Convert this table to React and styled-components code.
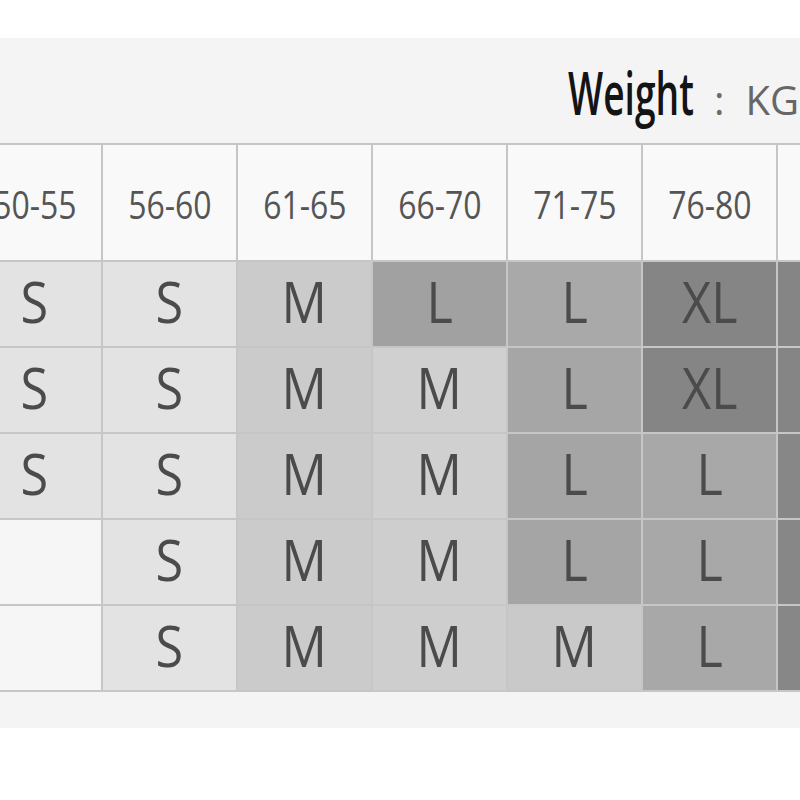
import React from "react";
import styled, { createGlobalStyle } from "styled-components";

const GlobalStyle = createGlobalStyle`
  html, body { margin: 0; padding: 0; background: #ffffff; overflow: hidden; }
  #root { width: 800px; height: 800px; }
`;

const Page = styled.div`
  width: 800px;
  height: 800px;
  box-sizing: border-box;
  padding-top: 38px;
  background: #ffffff;
  font-family: "Open Sans", "Liberation Sans", sans-serif;
`;

const Panel = styled.section`
  background: #f4f4f4;
  overflow: hidden;
  padding-bottom: 36px;
`;

const TitleRow = styled.div`
  height: 105px;
  box-sizing: border-box;
  padding: 25px 0 0 568px;
  display: flex;
  align-items: baseline;
  white-space: nowrap;
  line-height: 1;
`;

const Squeeze = styled.span`
  display: inline-block;
  width: ${(p) => p.$w}px;
  white-space: nowrap;
  & > span {
    display: inline-block;
    transform: scaleX(${(p) => p.$k});
    transform-origin: left center;
  }
`;

const Word = styled.span`
  font-size: 59px;
  font-weight: 600;
  color: #141414;
`;

const Colon = styled.span`
  font-size: 40px;
  color: #6a6a6a;
  margin-left: 22px;
`;

const Unit = styled.span`
  font-size: 40px;
  color: #676767;
  margin-left: 21px;
`;

const Grid = styled.div`
  display: grid;
  grid-template-columns: repeat(7, 133px);
  grid-template-rows: 115px repeat(5, 84px);
  gap: 2px;
  padding: 2px 0;
  margin-left: -32px;
  width: max-content;
  background: #c6c6c6;
`;

const HeadCell = styled.div`
  background: #f9f9f9;
  display: flex;
  align-items: center;
  justify-content: center;
  padding-top: 2px;
  box-sizing: border-box;
  font-size: 39px;
  color: #555555;
  white-space: nowrap;
  & > span {
    display: inline-block;
    transform: scaleX(0.82);
  }
`;

const SizeCell = styled.div`
  background: ${(p) => p.$bg};
  display: flex;
  align-items: center;
  justify-content: center;
  padding-bottom: 7px;
  box-sizing: border-box;
  font-size: 56px;
  color: #4b4b4b;
  white-space: nowrap;
  & > span {
    display: inline-block;
    transform: scaleX(0.9);
  }
`;

const headers = ["50-55", "56-60", "61-65", "66-70", "71-75", "76-80", "81-85"];

const rows = [
  [["S", "#e3e3e3"], ["S", "#e3e3e3"], ["M", "#cbcbcb"], ["L", "#a1a1a1"], ["L", "#a9a9a9"], ["XL", "#858585"], ["XL", "#858585"]],
  [["S", "#e3e3e3"], ["S", "#e3e3e3"], ["M", "#cbcbcb"], ["M", "#d0d0d0"], ["L", "#a6a6a6"], ["XL", "#858585"], ["XL", "#858585"]],
  [["S", "#e3e3e3"], ["S", "#e3e3e3"], ["M", "#cbcbcb"], ["M", "#d0d0d0"], ["L", "#a5a5a5"], ["L", "#a8a8a8"], ["XL", "#878787"]],
  [["", "#f6f6f6"], ["S", "#e3e3e3"], ["M", "#cbcbcb"], ["M", "#cecece"], ["L", "#a5a5a5"], ["L", "#a8a8a8"], ["XL", "#878787"]],
  [["", "#f6f6f6"], ["S", "#e3e3e3"], ["M", "#cbcbcb"], ["M", "#cecece"], ["M", "#c9c9c9"], ["L", "#a8a8a8"], ["XL", "#878787"]],
];

export default function App() {
  return (
    <>
      <GlobalStyle />
      <Page>
        <Panel>
          <TitleRow>
            <Squeeze $w={124} $k={0.63}>
              <Word>Weight</Word>
            </Squeeze>
            <Colon>:</Colon>
            <Unit>KG</Unit>
          </TitleRow>
          <Grid>
            {headers.map((h) => (
              <HeadCell key={h}>
                <span>{h}</span>
              </HeadCell>
            ))}
            {rows.map((row, ri) =>
              row.map(([label, bg], ci) => (
                <SizeCell key={`${ri}-${ci}`} $bg={bg}>
                  <span>{label}</span>
                </SizeCell>
              ))
            )}
          </Grid>
        </Panel>
      </Page>
    </>
  );
}
